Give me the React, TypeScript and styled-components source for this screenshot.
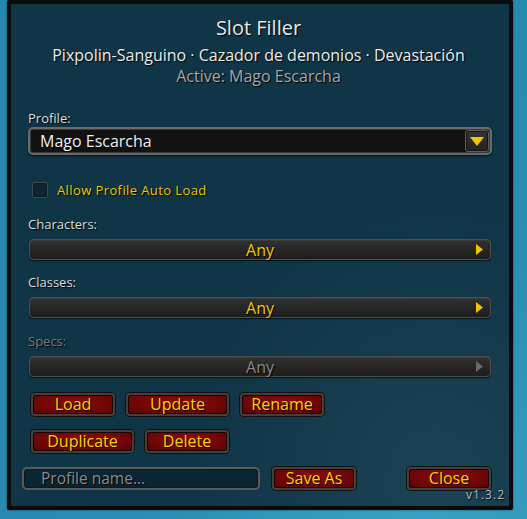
import React from "react";
import styled, { createGlobalStyle } from "styled-components";

const Global = createGlobalStyle`
  html, body { margin: 0; padding: 0; }
  body {
    width: 527px;
    height: 519px;
    overflow: hidden;
    background: radial-gradient(ellipse at 80% 110%, #3aa3c6 0%, #2a8db3 45%, #2487ae 100%);
    font-family: "Open Sans", "DejaVu Sans", sans-serif;
  }
`;

const Panel = styled.div`
  box-sizing: border-box;
  margin-left: 7px;
  width: 506px;
  height: 510px;
  border: 4px solid #0b0b0b;
  border-radius: 2px;
  background:
    radial-gradient(ellipse at 85% 95%, rgba(40, 80, 95, 0.5) 0%, rgba(0,0,0,0) 40%),
    #0f3547;
  box-shadow: 0 0 2px rgba(0,0,0,0.6);
  padding: 0 17px;
  display: flex;
  flex-direction: column;
  position: relative;
  color: #e6e6e6;
`;

const Header = styled.div`
  display: flex;
  flex-direction: column;
  align-items: center;
  text-shadow: 1px 1px 1px #000;
  margin-left: -3px;
`;

const Title = styled.div`
  margin-top: 13px;
  font-size: 20px;
  line-height: 22px;
  color: #e8e8e8;
`;

const Sub = styled.div<{ $muted?: boolean }>`
  font-size: 16px;
  line-height: 20px;
  white-space: nowrap;
  color: ${(p) => (p.$muted ? "#a6a6a6" : "#ececec")};
  margin-top: ${(p) => (p.$muted ? "1px" : "6px")};
`;

const Label = styled.div<{ $disabled?: boolean; $top: number }>`
  font-size: 13px;
  line-height: 14px;
  margin-top: ${(p) => p.$top}px;
  color: ${(p) => (p.$disabled ? "#7a7a7a" : "#dcdcdc")};
  text-shadow: 1px 1px 1px #000;
`;

const Dropdown = styled.div`
  box-sizing: border-box;
  margin-top: 2px;
  height: 28px;
  border-radius: 5px;
  border: 2px solid #6b6b6b;
  box-shadow: inset 0 0 0 1px #3a3a3a, 0 1px 2px rgba(0,0,0,0.7);
  background: #121212;
  display: flex;
  align-items: center;
  padding: 0 1px 0 10px;
`;

const DropText = styled.div`
  flex: 1;
  font-size: 16px;
  color: #f0f0f0;
  text-shadow: 1px 1px 1px #000;
`;

const DropButton = styled.div`
  box-sizing: border-box;
  width: 24px;
  height: 22px;
  border-radius: 3px;
  border: 1px solid #5e5e5e;
  background: linear-gradient(#343434, #222);
  box-shadow: inset 0 0 0 1px #161616;
  display: flex;
  align-items: center;
  justify-content: center;
`;

const CheckRow = styled.div`
  margin-top: 27px;
  height: 16px;
  display: flex;
  align-items: center;
  gap: 9px;
  padding-left: 4px;
`;

const Check = styled.div`
  box-sizing: border-box;
  width: 16px;
  height: 16px;
  border-radius: 3px;
  border: 1px solid #3e4a50;
  background: #0e2631;
  box-shadow: inset 0 0 2px #000;
`;

const CheckLabel = styled.div`
  font-size: 13px;
  letter-spacing: 0.4px;
  color: #eec600;
  text-shadow: 1px 1px 1px #000;
`;

const Selector = styled.div<{ $disabled?: boolean }>`
  box-sizing: border-box;
  margin: 8px 1px 0 1px;
  height: 21px;
  border-radius: 4px;
  border: 1px solid #4e4e4e;
  background: linear-gradient(#313131, #1d1d1d);
  box-shadow: inset 0 1px 0 #3c3c3c, 0 1px 1px rgba(0,0,0,0.7);
  position: relative;
  display: flex;
  align-items: center;
  justify-content: center;
  padding-top: 1px;
  font-size: 16px;
  color: ${(p) => (p.$disabled ? "#8a8a8a" : "#f2c900")};
  text-shadow: 1px 1px 1px #000;
`;

const Arrow = styled.svg`
  position: absolute;
  right: 7px;
  top: 4px;
`;

const ButtonRow = styled.div<{ $top: number }>`
  display: flex;
  gap: 11px;
  margin-top: ${(p) => p.$top}px;
  padding-left: 3px;
`;

const RedButton = styled.div<{ $w: number }>`
  box-sizing: border-box;
  width: ${(p) => p.$w}px;
  height: 23px;
  border-radius: 4px;
  border: 2px solid #404040;
  box-shadow: 0 0 0 1px #111, inset 0 0 0 1px #1a0000;
  background: radial-gradient(ellipse at 50% 40%, #8a0c0c 0%, #6c0606 70%, #520303 100%);
  display: flex;
  align-items: center;
  justify-content: center;
  padding-bottom: 2px;
  font-size: 16px;
  color: #ffd200;
  text-shadow: 1px 1px 1px #000;
`;

const BottomRow = styled.div`
  margin-top: 14px;
  margin-left: -6px;
  display: flex;
  align-items: center;
`;

const Input = styled.div`
  box-sizing: border-box;
  width: 238px;
  height: 23px;
  border-radius: 5px;
  border: 2px solid #5a5a5a;
  background: #0c2532;
  box-shadow: inset 0 0 2px #000;
  display: flex;
  align-items: center;
  padding-left: 17px;
  padding-bottom: 1px;
  font-size: 15.5px;
  color: #8a8a8a;
  text-shadow: 1px 1px 1px #000;
`;

const Spacer = styled.div<{ $w: number }>`
  width: ${(p) => p.$w}px;
  flex: none;
`;

const Version = styled.div`
  position: absolute;
  right: 4px;
  bottom: 3px;
  font-size: 12px;
  color: #b8b8b8;
  letter-spacing: 1px;
  text-shadow: 1px 1px 1px #000;
`;

const RightArrow = ({ color }: { color: string }) => (
  <Arrow width="7" height="11" viewBox="0 0 7 11">
    <path d="M0 0 L7 5.5 L0 11 Z" fill={color} />
  </Arrow>
);

export default function App() {
  return (
    <>
      <Global />
      <Panel>
        <Header>
          <Title>Slot Filler</Title>
          <Sub>Pixpolin-Sanguino · Cazador de demonios · Devastación</Sub>
          <Sub $muted>Active: Mago Escarcha</Sub>
        </Header>

        <Label $top={25}>Profile:</Label>
        <Dropdown>
          <DropText>Mago Escarcha</DropText>
          <DropButton>
            <svg width="14" height="9" viewBox="0 0 14 9">
              <path d="M0 0 L14 0 L7 9 Z" fill="#f5c400" />
            </svg>
          </DropButton>
        </Dropdown>

        <CheckRow>
          <Check />
          <CheckLabel>Allow Profile Auto Load</CheckLabel>
        </CheckRow>

        <Label $top={19}>Characters:</Label>
        <Selector>
          Any
          <RightArrow color="#f5c400" />
        </Selector>

        <Label $top={15}>Classes:</Label>
        <Selector>
          Any
          <RightArrow color="#f5c400" />
        </Selector>

        <Label $top={16} $disabled>Specs:</Label>
        <Selector $disabled>
          Any
          <RightArrow color="#6a6a6a" />
        </Selector>

        <ButtonRow $top={16}>
          <RedButton $w={84}>Load</RedButton>
          <RedButton $w={103}>Update</RedButton>
          <RedButton $w={84}>Rename</RedButton>
        </ButtonRow>
        <ButtonRow $top={14}>
          <RedButton $w={103}>Duplicate</RedButton>
          <RedButton $w={84}>Delete</RedButton>
        </ButtonRow>

        <BottomRow>
          <Input>Profile name...</Input>
          <Spacer $w={12} />
          <RedButton $w={84}>Save As</RedButton>
          <Spacer $w={51} />
          <RedButton $w={84}>Close</RedButton>
        </BottomRow>

        <Version>v1.3.2</Version>
      </Panel>
    </>
  );
}
